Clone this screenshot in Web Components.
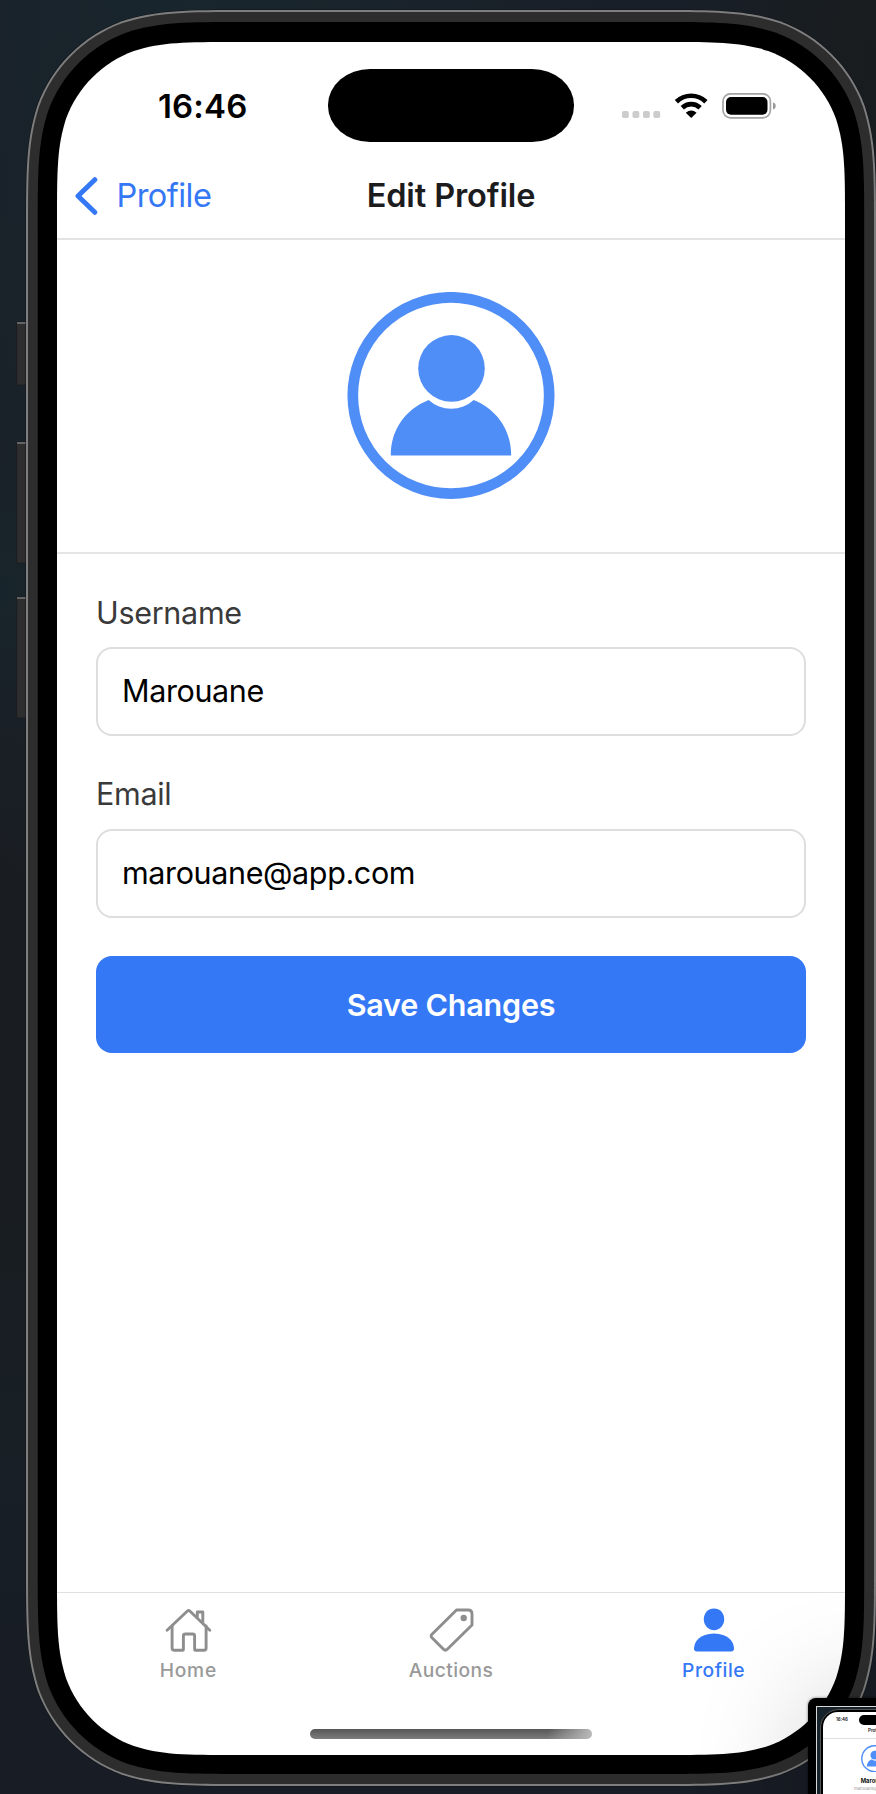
<!DOCTYPE html>
<html lang="en">
<head>
<meta charset="utf-8">
<title>Edit Profile</title>
<style>
html,body{margin:0;padding:0}
body{width:876px;height:1794px;overflow:hidden;font-family:Inter,"Liberation Sans",sans-serif;-webkit-font-smoothing:antialiased}
</style>
</head>
<body>
<sim-desktop>
  <phone-frame>
    <status-bar time="16:46"></status-bar>
    <nav-bar back="Profile">Edit Profile</nav-bar>
    <avatar-panel></avatar-panel>
    <profile-form>
      <text-field label="Username">Marouane</text-field>
      <text-field label="Email">marouane@app.com</text-field>
      <primary-button>Save Changes</primary-button>
    </profile-form>
    <tab-bar>
      <tab-item icon="home" style="--ls:.8px">Home</tab-item>
      <tab-item icon="tag" style="--ls:.45px">Auctions</tab-item>
      <tab-item icon="person" active style="--ls:.55px">Profile</tab-item>
    </tab-bar>
  </phone-frame>
  <mini-preview slot="overlay"></mini-preview>
</sim-desktop>
<script>
// Continuous-curvature rounded rectangle.
function squircle(x, y, w, h, r) {
  const X = x + w, Y = y + h;
  const [a, b, c, d, e, f, g] = [1.48, 1.06, .868, .635, .374, .1695, .0745].map(v => v * r);
  return `M${x + a} ${y}L${X - a} ${y}C${X - b} ${y} ${X - c} ${y} ${X - d} ${y + g}` +
    `C${X - e} ${y + f} ${X - f} ${y + e} ${X - g} ${y + d}C${X} ${y + c} ${X} ${y + b} ${X} ${y + a}` +
    `L${X} ${Y - a}C${X} ${Y - b} ${X} ${Y - c} ${X - g} ${Y - d}` +
    `C${X - f} ${Y - e} ${X - e} ${Y - f} ${X - d} ${Y - g}C${X - c} ${Y} ${X - b} ${Y} ${X - a} ${Y}` +
    `L${x + a} ${Y}C${x + b} ${Y} ${x + c} ${Y} ${x + d} ${Y - g}` +
    `C${x + e} ${Y - f} ${x + f} ${Y - e} ${x + g} ${Y - d}C${x} ${Y - c} ${x} ${Y - b} ${x} ${Y - a}` +
    `L${x} ${y + a}C${x} ${y + b} ${x} ${y + c} ${x + g} ${y + d}` +
    `C${x + f} ${y + e} ${x + e} ${y + f} ${x + d} ${y + g}C${x + c} ${y} ${x + b} ${y} ${x + a} ${y}Z`;
}
function define(name, render) {
  customElements.define(name, class extends HTMLElement {
    constructor() {
      super();
      this.attachShadow({ mode: 'open' });
    }
    connectedCallback() {
      this.shadowRoot.innerHTML = render(this);
    }
  });
}
const AVATAR = `<circle cx="104" cy="103.5" r="98.2" fill="none" stroke="#508ef7" stroke-width="10.7"/>
<circle cx="104.500" cy="76.400" r="33.300" fill="#508ef7"/>
<path d="M43.800 163.400C43.800 138 58 117.500 81.700 108A33 33 0 0 0 126.700 108C150 117.500 164.200 138 164.200 163.400Z" fill="#508ef7"/>`;

define('sim-desktop', () => `<style>
:host{display:block;position:relative;width:876px;height:1794px;overflow:hidden;
background:radial-gradient(circle at 0 590px,#18242b 0,#18242b00 150px),radial-gradient(ellipse at 200px 0,#19262d 0,#19262d00 400px),radial-gradient(ellipse at 876px 60px,#181c1e 0,#181c1e00 200px),linear-gradient(#191f28,#1a1f26 30%,#191c20 60%,#181f25 80%,#181c24)}
</style><slot></slot><slot name="overlay"></slot>`);

define('phone-frame', () => {
  const key = (y, h) => `<rect x="16.700" y="${y}" width="14" height="${h}" rx="1.500" fill="#2e2e2e" stroke="#15181b" stroke-width=".6"/><rect x="17" y="${y}" width="10" height="2" fill="#636363"/>`;
  return `<style>
:host{display:grid;width:876px;height:1794px}
svg,.screen{grid-area:1/1}
.screen{margin:42px 31px 39px 57px;display:flex;flex-direction:column;background:#fff;clip-path:path('${squircle(0, 0, 788, 1713, 121)}')}
</style>
<svg width="876" height="1794">${key(322, 63)}${key(442, 121)}${key(597, 121)}
<path d="${squircle(25.5, 9.5, 851, 1777, 151)}" fill="#11151a"/>
<path d="${squircle(26, 10, 850, 1776, 151)}" fill="#7e7e7e"/>
<path d="${squircle(28, 12, 846, 1772, 149)}" fill="#2d2d2d"/>
<path d="${squircle(37.7, 22, 826.5, 1752, 140)}" fill="#000"/></svg>
<div class="screen"><slot></slot></div>`;
});

define('status-bar', el => `<style>
:host{display:grid;grid-template-columns:271px 246px 1fr;grid-template-rows:73px;height:72px;padding:27px 0 5px}
.time{line-height:72px;padding:1.400px 0 0 101px;font-size:33px;font-weight:600;letter-spacing:.15px;color:#000}
.island{height:72.500px;border-radius:42px/36px;background:#000}
.icons{display:flex;align-items:flex-end;padding:0 0 23px 48px}
.icons svg{display:block}
</style>
<div class="time">${el.getAttribute('time')}</div><div class="island"></div>
<div class="icons"><svg width="155" height="26" viewBox="622 93 155 26">
<g fill="#ccc"><rect x="622" y="111" width="6.800" height="7" rx="1.800"/><rect x="632.500" y="111" width="6.800" height="7" rx="1.800"/><rect x="643" y="111" width="6.800" height="7" rx="1.800"/><rect x="653.400" y="111" width="6.800" height="7" rx="1.800"/></g>
<g transform="translate(675 93)" fill="none" stroke="#000" stroke-width="4.700"><path d="M1.400 8.700A21.300 21.300 0 0 1 30.900 8.700"/><path d="M7.300 14.800A12.800 12.800 0 0 1 25.100 14.800"/><path d="M16.200 24.900L10.800 19.700Q16.200 15.300 21.600 19.700Z" fill="#000" stroke="none"/></g>
<rect x="723" y="93.800" width="47.400" height="24" rx="7.500" fill="none" stroke="#a3a3a3" stroke-width="1.700"/>
<rect x="726" y="97" width="41.500" height="17.700" rx="5" fill="#000"/><path d="M773 102.500Q775.700 103 775.700 105.900Q775.700 108.800 773 109.300Z" fill="#999"/></svg></div>`);

define('nav-bar', el => `<style>
:host{display:grid;grid-template-columns:1fr auto 1fr;align-items:center;box-sizing:border-box;height:94px;padding-top:7px;border-bottom:2px solid #e3e3e3;font-size:32.500px}
.back{display:flex;align-items:center;color:#3478f6;padding-left:18px;letter-spacing:-.55px}
.back svg{margin-right:18.500px}
.title{font-weight:600;color:#1c1c1e;letter-spacing:-.12px}
</style>
<div class="back"><svg width="23" height="38" viewBox="0 0 23 38"><path d="M19.800 2.700L3 19L19.800 35.300" fill="none" stroke="#3478f6" stroke-width="5" stroke-linecap="round" stroke-linejoin="round"/></svg><span>${el.getAttribute('back')}</span></div>
<div class="title"><slot></slot></div><div></div>`);

define('avatar-panel', () => `<style>
:host{display:flex;justify-content:center;box-sizing:border-box;height:314px;padding-top:52px;border-bottom:2px solid #e5e5e5}
svg{display:block}
</style><svg width="208" height="208" viewBox="0 0 208 208">${AVATAR}</svg>`);

define('profile-form', () => `<style>
:host{display:flex;flex-direction:column;gap:37.500px;flex:1;padding:38px 39px 0}
</style><slot></slot>`);

define('text-field', el => `<style>
:host{display:flex;flex-direction:column;gap:14px;font-size:30.500px}
.label{line-height:41px;height:41px;color:#3a3a3a;letter-spacing:-.3px}
:host(:nth-of-type(2)) .label{line-height:40px}
.box{box-sizing:border-box;height:89px;line-height:84px;border:2px solid #dedede;border-radius:16px;padding:0 24px;color:#000;letter-spacing:-.38px}
</style><div class="label">${el.getAttribute('label')}</div><div class="box"><slot></slot></div>`);

define('primary-button', () => `<style>
:host{display:block;margin-top:1px;height:97px;line-height:97px;border-radius:16px;background:#3478f6;color:#fff;text-align:center;font-size:30.500px;font-weight:600;letter-spacing:-.2px}
</style><slot></slot>`);

define('tab-bar', () => `<style>
:host{display:flex;flex-direction:column;box-sizing:border-box;height:163px;border-top:1px solid #e0e0e0}
.tabs{display:grid;grid-template-columns:repeat(3,1fr);height:136px}
.home{width:282px;height:10px;margin:0 auto;border-radius:5px;background:linear-gradient(100deg,#fff0 84%,#bbb 100%),linear-gradient(#565656,#7c7c7c)}
</style><div class="tabs"><slot></slot></div><div class="home"></div>`);

const ICONS = {
  home: `<g transform="translate(.8 0)" fill="none" stroke="#8e8e8e" stroke-width="2.900" stroke-linecap="round" stroke-linejoin="round"><path d="M2.300 22.200L22.600 3Q23.800 2 25 3L45 22.200"/><path d="M7.300 18V40Q7.300 42.300 9.600 42.300H17.900Q18.600 42.300 18.600 41.500V28Q18.600 26 20.600 26H27.800Q29.800 26 29.800 28V41.500Q29.800 42.300 30.600 42.300H39Q41.300 42.300 41.300 40V18M32.500 9V4H38V15"/></g>`,
  tag: `<g transform="translate(2 0)"><path d="M27.500 2H39Q43 2 43 6V17L18.300 41.200Q16.400 43.100 14.500 41.200L3 29.800Q1.200 28 3 26.200Z" fill="none" stroke="#8e8e8e" stroke-width="2.900" stroke-linejoin="round"/><circle cx="34.700" cy="10" r="3.200" fill="#8e8e8e"/></g>`,
  person: `<g fill="#3478f6"><path d="M24 0.400C30 .4 34.200 5 34.200 11.300C34.200 17.300 29.800 22.200 24 22.200C18.200 22.200 13.800 17.300 13.800 11.300C13.800 5 18 .4 24 .4Z"/><path d="M4 40.400C4 34 10 25.500 24 25.500C38 25.500 44 34 44 40.400Q44 43.400 41 43.400H7Q4 43.400 4 40.400Z"/></g>`
};
define('tab-item', el => `<style>
:host{display:flex;flex-direction:column;align-items:center;padding-top:15px;color:#999;font-size:19.200px;font-weight:500;letter-spacing:var(--ls)}
:host([active]){color:#3478f6;}
svg{display:block}
span{line-height:26px;margin-top:4.500px}
</style><svg width="48" height="44" viewBox="0 0 48 44">${ICONS[el.getAttribute('icon')]}</svg><span><slot></slot></span>`);

// Picture-in-picture thumbnail that hangs off the lower right corner.
define('mini-preview', () => `<style>
:host{position:absolute;left:808px;top:1698px;width:200px;height:200px;box-sizing:border-box;padding:8px;background:#000;border-radius:8px;box-shadow:0 4px 110px 6px rgba(0,0,0,.18),0 0 3px #0008}
.pane{box-sizing:border-box;height:100%;border:1.500px solid #d8d8d8;border-right:0;background:#17232a;padding:1.500px 0 0 2.500px;overflow:hidden}
.bezel{box-sizing:border-box;width:110px;height:200px;background:#000;border:.7px solid #555;border-radius:19px;padding:2.200px 2.500px}
.screen{box-sizing:border-box;width:104px;height:200px;background:#fff;border-radius:15px;color:#111;overflow:hidden}
.status{display:grid;grid-template-columns:35.500px 33px 1fr;padding-top:3.500px}
.time{font-size:4.400px;font-weight:600;line-height:10px;padding-left:13px}
.island{height:9.500px;border-radius:5px;background:#000}
.title{text-align:center;font-size:4.400px;font-weight:600;line-height:12.500px;height:13px;border-bottom:.5px solid #ddd}
.avatar{display:block;margin:5.500px auto 5px}
.name{text-align:center;font-size:5.800px;font-weight:700;line-height:8px}
.mail{text-align:center;font-size:4.300px;line-height:7px;color:#999}
</style>
<div class="pane"><div class="bezel"><div class="screen">
<div class="status"><div class="time">16:46</div><div class="island"></div></div>
<div class="title">Profile</div>
<svg class="avatar" width="27.500" height="27.500" viewBox="0 0 208 208">${AVATAR}</svg>
<div class="name">Marouane</div><div class="mail">marouane@app.com</div>
</div></div></div>`);
</script>
</body>
</html>
